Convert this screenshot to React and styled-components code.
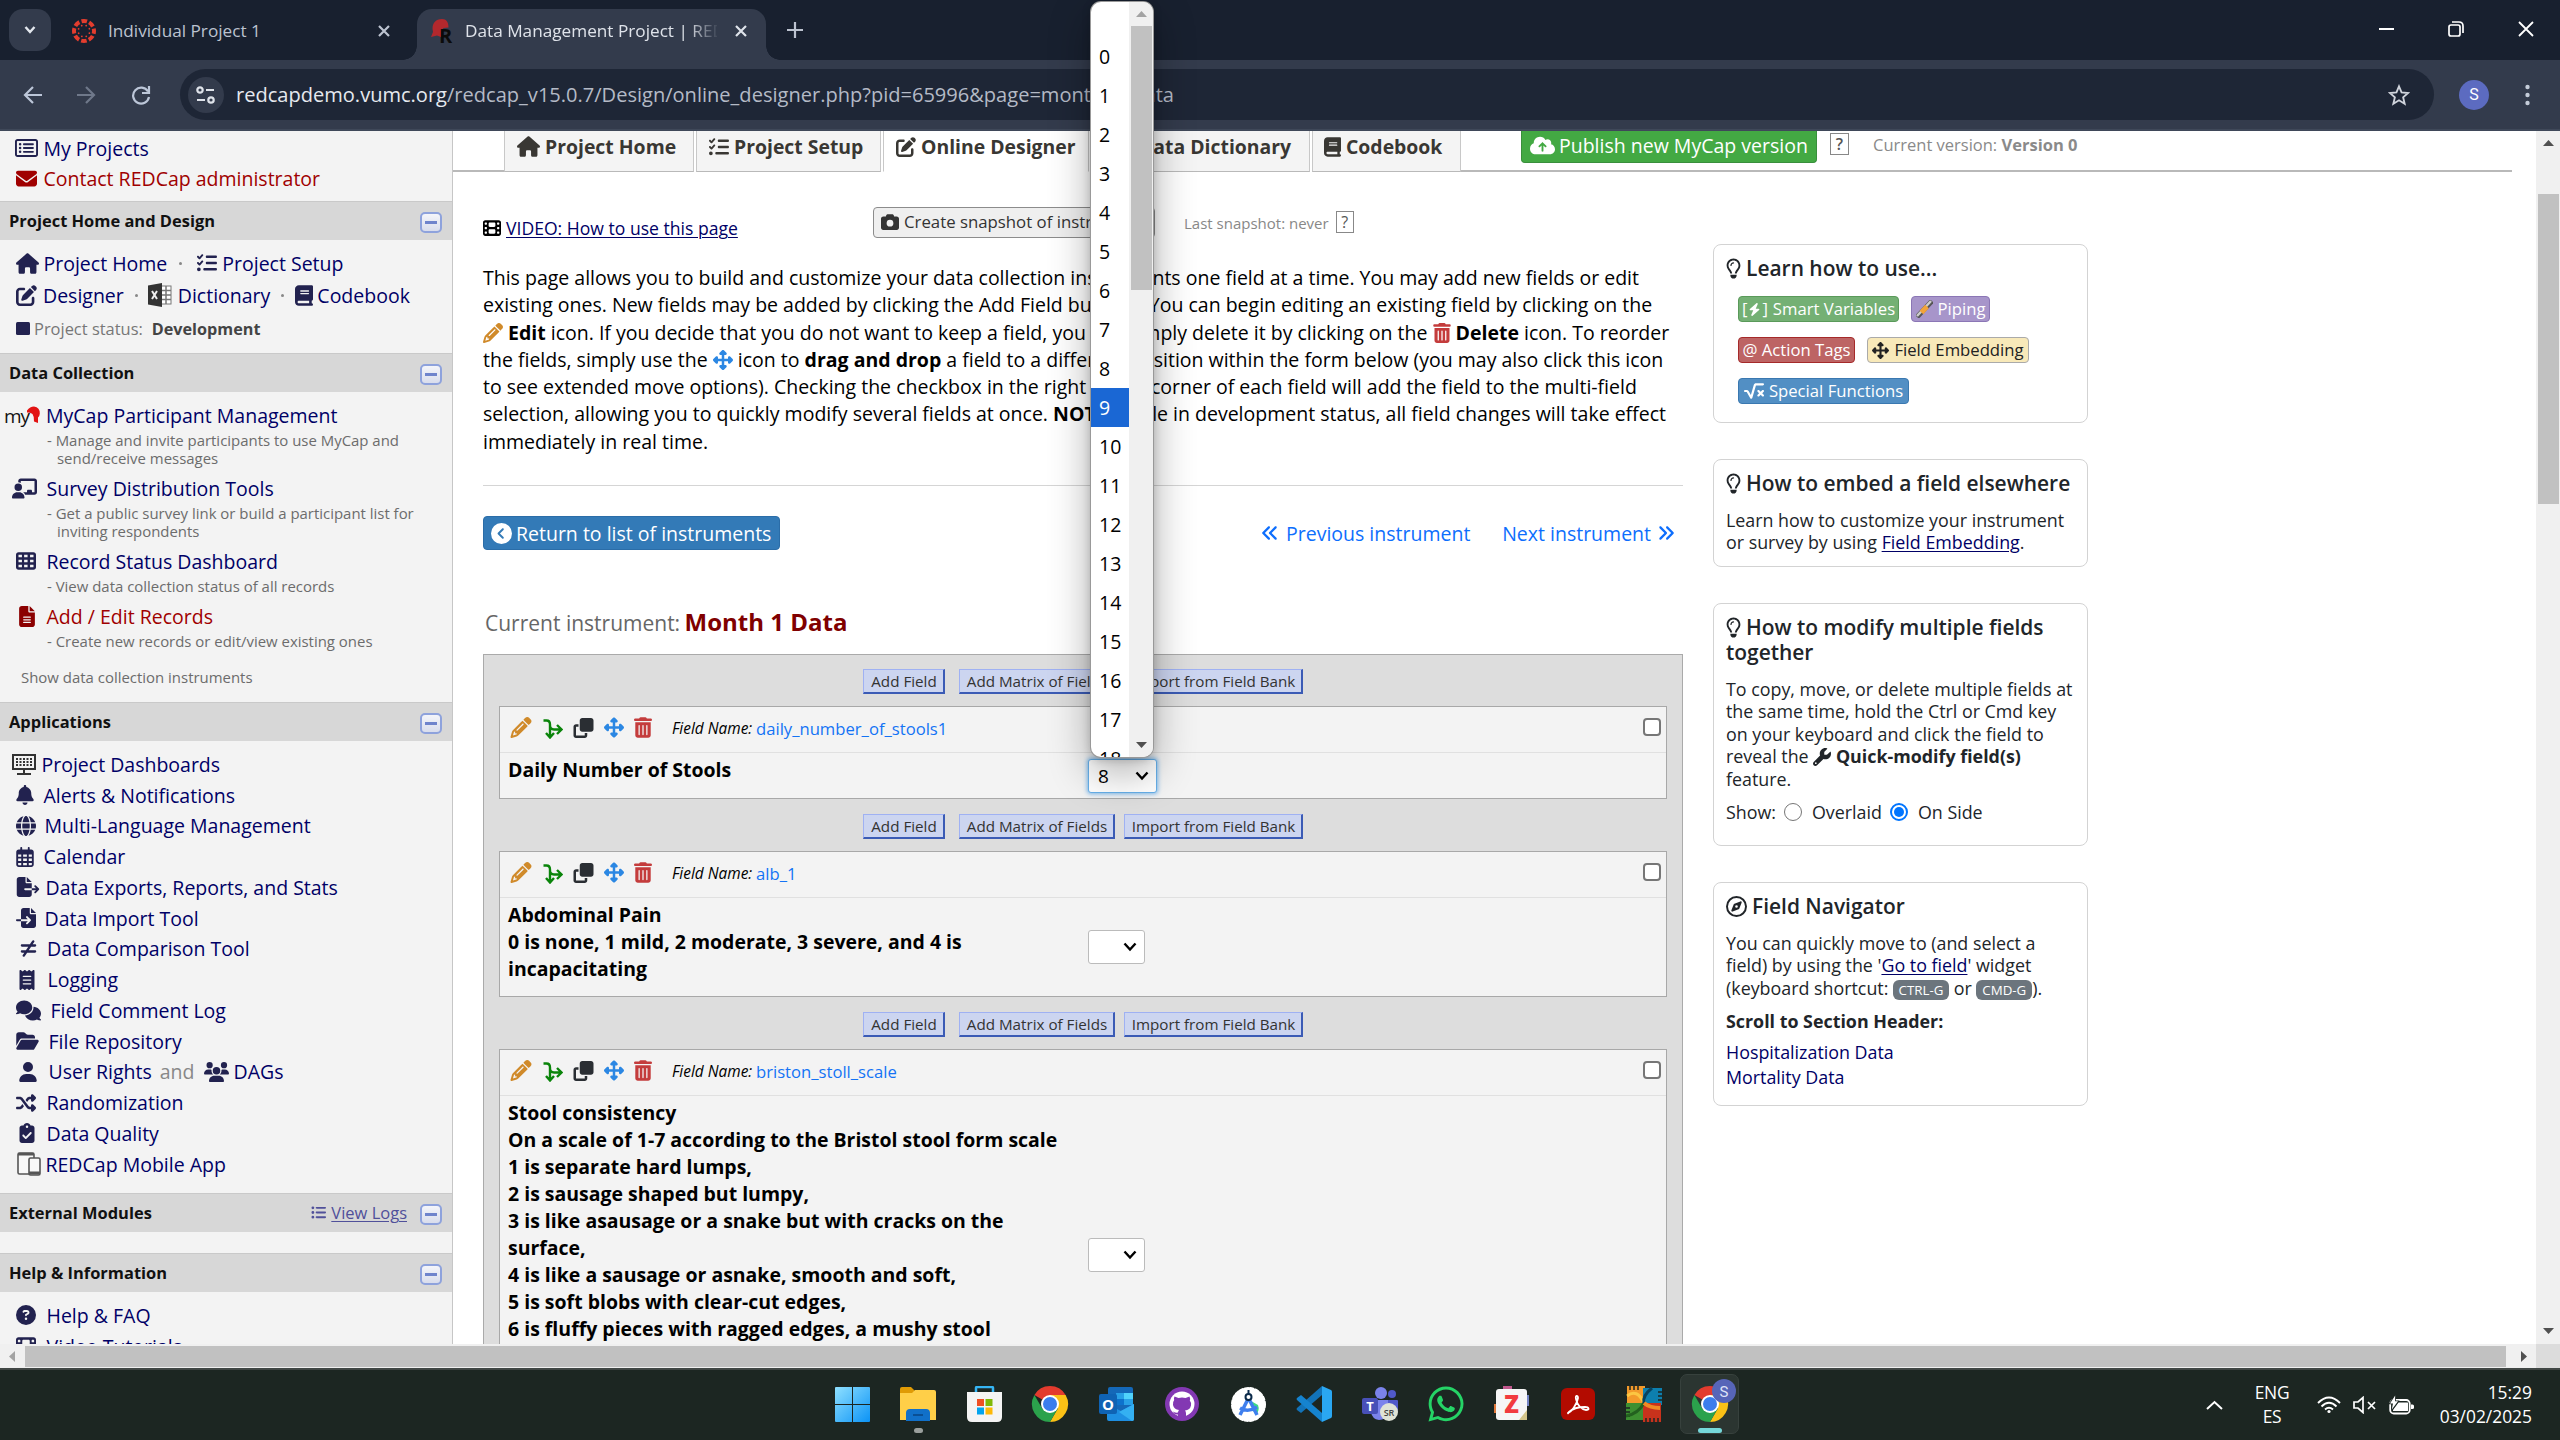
import React from "react";
import styled, { createGlobalStyle, css } from "styled-components";
import {
  FaHouse, FaListCheck, FaPenToSquare, FaBook, FaCloudArrowUp, FaFilm, FaCamera, FaPencil,
  FaUpDownLeftRight, FaTrashCan, FaCircleChevronLeft, FaAnglesLeft, FaAnglesRight, FaRegLightbulb,
  FaRegCompass, FaWrench, FaEnvelope, FaRegRectangleList, FaChalkboardUser, FaTableCells,
  FaFileLines, FaBell, FaGlobe, FaRegCalendarDays, FaFileExport, FaFileImport, FaNotEqual,
  FaReceipt, FaComments, FaFolderOpen, FaUser, FaUsers, FaShuffle, FaClipboardCheck,
  FaCircleQuestion, FaListUl, FaClone, FaBolt, FaSquareRootVariable, FaWhatsapp,
} from "react-icons/fa6";

const Global = createGlobalStyle`
  * { box-sizing: border-box; }
  body { margin: 0; overflow: hidden; font-family: "Open Sans", "Noto Sans", sans-serif; color: #000; }
  svg { display: block; flex: none; }
`;

const Screen = styled.div`
  width: 2560px; height: 1440px; display: flex; flex-direction: column;
  position: relative; overflow: hidden; background: #fff;
`;

const Icon = styled.span`
  display: inline-flex; align-items: center; justify-content: center; flex: none;
  width: ${(p) => p.$w}px; color: ${(p) => p.$c || "inherit"};
  margin-left: ${(p) => p.$ml || 0}px; margin-right: ${(p) => p.$mr || 0}px;
  ${(p) => p.$inline && css`vertical-align: ${p.$va || -3}px;`}
  svg { width: ${(p) => p.$w}px; height: ${(p) => p.$h || p.$w}px; }
`;

/* ---------- browser chrome ---------- */
const TabStrip = styled.div`
  height: 60px; flex: none; background: #18202f; display: flex; align-items: flex-start; padding: 9px 25px 0 9px;
`;
const TabSearch = styled.div`
  width: 42px; height: 42px; border-radius: 14px; background: #333b4c; color: #e3e7ee;
  display: flex; align-items: center; justify-content: center;
`;
const BrowserTab = styled.div`
  height: 51px; display: flex; align-items: center; padding: 0 0 8px; position: relative;
  width: ${(p) => p.$w}px; margin-left: ${(p) => p.$ml}px; padding-left: ${(p) => p.$pl}px;
  color: ${(p) => (p.$active ? "#dfe3ea" : "#bcc3d0")}; font-size: 17.2px;
  ${(p) => p.$active && css`
    background: #333b4c; border-radius: 15px 15px 0 0;
    &::before, &::after { content: ""; position: absolute; bottom: 0; width: 14px; height: 14px; }
    &::before { left: -14px; background: radial-gradient(circle at 0 0, transparent 13.5px, #333b4c 14px); }
    &::after { right: -14px; background: radial-gradient(circle at 100% 0, transparent 13.5px, #333b4c 14px); }
  `}
`;
const TabTitle = styled.span`
  white-space: nowrap; overflow: hidden; width: ${(p) => p.$w}px; margin-left: 12px; line-height: 26px; padding-top: 1px;
  ${(p) => p.$fade && css`-webkit-mask-image: linear-gradient(90deg, #000 88%, transparent 101%); mask-image: linear-gradient(90deg, #000 88%, transparent 101%);`}
`;
const NewTab = styled.div`margin: 12px 0 0 20px;`;
const WindowButtons = styled.div`
  margin: 10px 0 0 auto; display: flex; gap: 53px; align-items: center; height: 20px; color: #fff;
`;
const Toolbar = styled.div`
  height: 71px; flex: none; background: #333b4c; border-bottom: 2px solid #3f4859;
  display: flex; align-items: center; padding: 1px 22px 1px 23px; color: #bcc6d8;
`;
const NavButtons = styled.div`display: flex; gap: 30px; width: 157px; align-items: center;`;
const Omnibox = styled.div`
  height: 51px; width: 2254px; border-radius: 26px; background: #1e2636;
  display: flex; align-items: center; padding: 0 24px 0 8px; color: #b4bac6;
  font-size: 20.06px; white-space: nowrap;
`;
const SiteChip = styled.span`
  width: 36px; height: 36px; border-radius: 50%; background: #333b4c; margin-right: 12px;
  display: flex; align-items: center; justify-content: center;
`;
const Host = styled.span`color: #e6e9ef;`;
const Spacer = styled.span`flex: 1;`;
const Avatar = styled.span`
  width: 30px; height: 30px; border-radius: 50%; background: #5c6bc0; color: #fff; margin: 0 36px 0 25px;
  font: 16px Roboto, sans-serif; display: flex; align-items: center; justify-content: center;
`;

/* ---------- page ---------- */
const Page = styled.div`height: 1213px; flex: none; display: flex; overflow: hidden;`;
const Sidebar = styled.div`
  width: 453px; flex: none; background: #f3f3f3; border-right: 1px solid #c6c6c6; overflow: hidden;
  display: flex; flex-direction: column; color: #000066; font-size: 19.5px; white-space: nowrap;
`;
const SideBlock = styled.div`
  flex: none; height: ${(p) => p.$h}px; padding-top: ${(p) => p.$pt || 0}px; overflow: hidden;
`;
const SideHeader = styled.div`
  height: 39px; flex: none; background: #d7d7d7; border-top: 1px solid #c9c9c9; color: #111;
  display: flex; align-items: center; padding: 0 10px 2px 9px; font-weight: 700; font-size: 16.45px;
`;
const Toggle = styled.span`
  width: 22px; height: 21px; border: 2px solid #8ea2dc; border-radius: 5px; background: linear-gradient(#f4f5fa, #d9ddec);
  display: flex; align-items: center; justify-content: center; margin: 4px 0 0 13px;
  &::after { content: ""; width: 12px; height: 3px; background: #6f84cc; }
`;
const ViewLogs = styled.span`
  margin-left: auto; color: #50509a; font-weight: 400; font-size: 16.5px; display: flex; align-items: center; gap: 5px;
  u { text-underline-offset: 2px; text-decoration-thickness: 1px; }
`;
const NavRow = styled.div`
  display: flex; align-items: center; height: ${(p) => p.$h || 30.75}px; color: ${(p) => p.$c || "#000066"};
  font-size: ${(p) => p.$fs || 19.5}px;
`;
const IconSlot = styled.span`
  width: ${(p) => p.$w}px; padding-left: ${(p) => p.$pl}px; flex: none; display: flex; align-items: center;
  color: ${(p) => p.$c || "#22224f"};
`;
const Dot = styled.span`width: 3px; height: 3px; border-radius: 50%; background: #888; margin: 0 ${(p) => p.$r}px 0 ${(p) => p.$l}px;`;
const Gray = styled.span`color: #888; margin: 0 10px 0 8px;`;
const StatusValue = styled.b`color: #444; margin-left: 9px; font-size: 16.2px;`;
const SubText = styled.div`
  font-size: 14.95px; line-height: 18px; color: #6c6c6c; padding-left: ${(p) => p.$pl || 57}px;
  text-indent: ${(p) => (p.$pl ? 0 : -10)}px; height: ${(p) => p.$h}px;
`;
const MyCapMark = styled.span`
  width: 46px; flex: none; padding-left: 4px; display: flex; align-items: center; color: #111; font-size: 19px; letter-spacing: -1.2px;
  svg { margin-left: -2px; margin-top: 0; }
`;

const Main = styled.div`flex: 1; min-width: 0; background: #fff; overflow: hidden;`;
const PageTabs = styled.div`height: 41px; display: flex; position: relative;`;
const TabLine = styled.div`
  border-bottom: 2px solid #b9b9b9; width: ${(p) => p.$w}px; margin-left: ${(p) => p.$ml || 0}px; display: flex; flex: none;
`;
const PageTab = styled.div`
  height: 41px; width: ${(p) => p.$w}px; flex: none; display: flex; align-items: center; padding: 0 0 9px ${(p) => p.$pl || 12}px;
  margin-right: 2px; gap: 5px; background: ${(p) => (p.$active ? "#fff" : "#f4f4f4")}; font-weight: 700; font-size: 19.4px; color: #393733;
  border: 1px solid #c8c8c8; border-top: 0; border-bottom-color: ${(p) => (p.$active ? "#fff" : "#b9b9b9")}; white-space: nowrap;
`;
const PublishButton = styled.div`
  margin-left: 60px; height: 32px; width: 296px; background: #43a943; border: 1px solid #398f3c; border-top: 0; border-radius: 0 0 4px 4px;
  color: #fff; font-size: 19.5px; display: flex; align-items: center; padding: 0 0 2px 8px; gap: 4px; white-space: nowrap;
`;
const HelpBox = styled.span`
  width: ${(p) => p.$w}px; height: 22px; border: 1px solid #888; color: #555; font-size: 16px; font-weight: ${(p) => p.$b || 400};
  display: flex; align-items: center; justify-content: center; margin: ${(p) => p.$m};
`;
const VersionText = styled.span`color: #8a8a8a; font-size: 16.5px; margin: 2px 0 0 24px; line-height: 23px;`;

const Columns = styled.div`display: flex; padding-left: 30px; gap: 30px;`;
const Left = styled.div`width: 1200px; flex: none;`;
const TopRow = styled.div`display: flex; padding-top: 35px; height: 66px; white-space: nowrap;`;
const VideoLink = styled.div`
  display: flex; align-items: center; gap: 5px; width: 390px; height: 42px; font-size: 17.58px; color: #000066;
  text-decoration: underline; text-underline-offset: 2px; text-decoration-thickness: 1px;
`;
const SnapButton = styled.div`
  width: 282px; height: 31px; border: 1px solid #8c8c8c; border-radius: 4px; background: #efefef; color: #333; font-size: 16.8px;
  display: flex; align-items: center; padding: 0 0 2px 7px; gap: 5px;
`;
const SnapText = styled.span`color: #888; font-size: 15px; margin: 5px 0 0 29px; line-height: 22px;`;
const Intro = styled.div`
  margin: 26px 0 30px; font-size: 19.5px; line-height: 27.3px; white-space: nowrap;
  div { height: 27.3px; }
`;
const Rule = styled.div`height: 1px; background: #d5d5d5;`;
const ReturnRow = styled.div`
  margin-top: 30px; display: flex; height: 34px; align-items: center; color: #0d6efd; font-size: 19.5px; white-space: nowrap;
`;
const ReturnButton = styled.div`
  width: 297px; height: 34px; border-radius: 4px; background: #337ab7; border: 1px solid #2b6da8; color: #fff;
  display: flex; align-items: center; padding: 0 0 0 7px; gap: 4px; margin-right: 481px;
`;
const InstrumentTitle = styled.div`
  margin: 57px 0 17px 2px; height: 30px; line-height: 30px; font-size: 21px; color: #666; white-space: nowrap;
`;
const InstrumentName = styled.b`margin-left: -1px; color: #800000; font-size: 24px;`;
const Designer = styled.div`
  border: 1px solid #aaa; background: #ddd; padding: 0 15px; height: 900px;
`;
const AddRow = styled.div`
  display: flex; padding: ${(p) => (p.$first ? 14 : 15)}px 0 12px 364px; height: ${(p) => (p.$first ? 51 : 52)}px;
`;
const AddButton = styled.div`
  width: ${(p) => p.$w}px; margin-right: ${(p) => p.$mr || 0}px; height: 25px; background: #ccd5f0; border: 1px solid #9fb1f3;
  border-right: 2px solid #3b5bb5; border-bottom: 2px solid #3b5bb5; color: #333; font-size: 15.2px; white-space: nowrap;
  display: flex; align-items: center; justify-content: center; padding-left: 1px;
`;
const FieldBox = styled.div`border: 1px solid #a8a8a8; background: #f3f3f3; flex: none;`;
const FieldHead = styled.div`
  height: 46px; border-bottom: 1px solid #e0e0e0; display: flex; align-items: center; padding: 0 5px 4px 10px; font-size: 16.65px;
  i { font-size: 15.4px; margin-left: 20px; width: 84px; margin-top: 2px; }
`;
const FieldLink = styled.span`color: #1473f5; margin-top: 2px;`;
const Checkbox = styled.span`width: 18px; height: 18px; border: 2px solid #767676; border-radius: 4px; background: #fff; margin: -1px 0 0 auto;`;
const FieldBody = styled.div`height: ${(p) => p.$h}px; display: flex; align-items: center; padding-left: 8px;`;
const FieldLabel = styled.div`
  align-self: flex-start; width: 580px; padding-top: 3px; font-weight: 700; font-size: 19.48px; line-height: 27px; white-space: nowrap;
`;
const Select = styled.div`
  width: ${(p) => (p.$open ? 69 : 57)}px; height: 34px; border: 1px solid #bbb; border-radius: 3px; background: #fff; font-size: 19px;
  display: flex; align-items: center; justify-content: space-between; padding: 0 7px 0 9px;
  ${(p) => p.$open && css`border-color: #66afe9; box-shadow: 0 0 4px 1px #7db9ec;`}
`;

const Cards = styled.div`width: 375px; padding-top: 72px; flex: none;`;
const Card = styled.div`
  border: 1px solid #d3d3d3; border-radius: 8px; height: ${(p) => p.$h}px; margin-bottom: ${(p) => p.$mb || 0}px;
  padding: 11px 0 0 12px; color: #212529; font-size: 17.85px; line-height: 22.4px; white-space: nowrap;
`;
const CardTitle = styled.div`font-size: 20.95px; font-weight: 600; line-height: 25px; margin-bottom: ${(p) => p.$mb || 13}px;`;
const ChipRow = styled.div`display: flex; gap: 12px; margin: 0 0 15px 12px;`;
const Chip = styled.div`
  height: 26px; width: ${(p) => p.$w}px; background: ${(p) => p.$bg}; border: 1px solid ${(p) => p.$bd}; border-radius: 4px; color: ${(p) => p.$c || "#fff"};
  font-size: 16.7px; display: flex; align-items: center; justify-content: center; gap: 5px;
`;
const Brackets = styled.span`display: flex; align-items: center; gap: 1px;`;
const Link = styled.span`color: #000066; text-decoration: ${(p) => (p.$plain ? "none" : "underline")}; text-underline-offset: 2px; text-decoration-thickness: 1px;`;
const RadioRow = styled.div`display: flex; align-items: center; margin-top: 11px;`;
const Radio = styled.span`
  width: 18px; height: 18px; border-radius: 50%; border: ${(p) => (p.$on ? "2px solid #0075ff" : "1.5px solid #767676")}; background: #fff;
  margin: 0 ${(p) => (p.$on ? 10 : 10)}px 0 ${(p) => p.$ml}px; display: flex; align-items: center; justify-content: center;
  ${(p) => p.$on && css`&::after { content: ""; width: 10px; height: 10px; border-radius: 50%; background: #0075ff; }`}
`;
const Kbd = styled.span`
  display: inline-block; width: 56px; height: 20px; border-radius: 6px; background: #6c757d; color: #fff; font-size: 13.3px; line-height: 20px; text-align: center;
  vertical-align: 0;
`;
const SectionHeading = styled.div`margin-top: 10px; font-weight: 700;`;
const LinkList = styled.div`margin-top: 8px; line-height: 25px;`;

const VScroll = styled.div`
  width: 24px; flex: none; background: #f0f0f0; display: flex; flex-direction: column; align-items: center; justify-content: space-between; padding: 9px 0 10px;
`;
const VThumb = styled.div`width: 21px; height: 310px; background: #c1c1c1; margin: 48px 0 auto;`;
const HScroll = styled.div`height: 24px; flex: none; background: #f0f0f0; display: flex; align-items: center; padding-left: 9px;`;
const HThumb = styled.div`width: 2481px; height: 21px; background: #c1c1c1; margin: 0 15px 0 10px;`;
const Corner = styled.div`width: 24px; height: 24px; background: #dcdcdc; margin-left: auto;`;

/* ---------- popup ---------- */
const Popup = styled.div`
  position: absolute; left: 1091px; top: 2px; width: 62px; height: 755px; background: #fff; border-radius: 10px; overflow: hidden;
  display: flex;
`;
const PopupShadow = styled.div`
  position: absolute; left: 1090px; top: 1px; width: 64px; height: 757px; border-radius: 11px; background: #999;
  box-shadow: 0 14px 42px rgba(0, 0, 0, 0.32), 0 2px 8px rgba(0,0,0,.18);
`;
const Options = styled.div`width: 38px; font-size: 19.5px;`;
const Option = styled.div`
  height: ${(p) => p.$h || 39}px; line-height: 39px; padding-left: 8px; white-space: nowrap;
  ${(p) => p.$on && css`background: #1a67d4; color: #fff;`}
`;
const PopupScroll = styled.div`
  width: 24px; background: #f0f0f0; display: flex; flex-direction: column; align-items: center; padding: 9px 0;
`;
const PopupThumb = styled.div`width: 21px; height: 264px; background: #c1c1c1; margin: 9px 0 auto 1px;`;

/* ---------- taskbar ---------- */
const Taskbar = styled.div`
  height: 72px; flex: none; background: #1c2622; border-top: 2px solid #414745; display: flex; align-items: center; color: #fff; padding: 0 28px 0 819px;
`;
const Task = styled.div`
  width: 66px; height: 70px; display: flex; align-items: center; justify-content: center; flex: none; position: relative; padding-bottom: 2px;
  svg { position: relative; }
`;
const Running = styled.span`
  position: absolute; bottom: 7px; height: 5px; border-radius: 3px; width: ${(p) => p.$w}px; background: ${(p) => p.$c};
`;
const ActiveTile = styled.span`position: absolute; top: 4px; left: 3px; width: 59px; height: 60px; border-radius: 7px; background: #2b3531; border: 1px solid #37413d;`;
const Tray = styled.div`margin-left: auto; display: flex; align-items: center; font-size: 17.4px; line-height: 24px;`;
const TrayText = styled.div`text-align: ${(p) => p.$a}; margin-left: ${(p) => p.$ml}px; width: ${(p) => p.$w}px; white-space: nowrap; padding-bottom: 2px; letter-spacing: ${(p) => p.$ls || 0}px;`;

/* ---------- drawings ---------- */
const Stroke = ({ w, h, d, sw = 2, vb, ...r }) => (
  <svg width={w} height={h} viewBox={vb || `0 0 ${w} ${h}`} fill="none" stroke="currentColor" strokeWidth={sw} {...r}><path d={d} /></svg>
);
const CloseX = () => <Stroke w={14} h={14} d="M2 2l10 10M12 2L2 12" sw={2.2} />;
const Tri = ({ dir, c = "#505050" }) => {
  const d = { up: "M0 6h11L5.5 0z", down: "M0 0h11L5.5 6z", left: "M6 0v11L0 5.5z", right: "M0 0v11l6-5.5z" }[dir];
  const v = dir === "up" || dir === "down";
  return <svg width={v ? 11 : 6} height={v ? 6 : 11} fill={c}><path d={d} /></svg>;
};
const CanvasLogo = () => (
  <svg width="24" height="24" viewBox="0 0 24 24">
    <circle cx="12" cy="12" r="10" fill="none" stroke="#e33d2e" strokeWidth="4" strokeDasharray="5.6 2.25" strokeDashoffset="2.8" />
    {[0, 45, 90, 135, 180, 225, 270, 315].map((a) => (
      <circle key={a} cx="12" cy="6.2" r="0.9" fill="#e33d2e" transform={`rotate(${a + 22} 12 12)`} />
    ))}
  </svg>
);
const RedcapLogo = () => (
  <svg width="23" height="24" viewBox="0 0 23 24">
    <path d="M3 13C1 4 6 0 12 0c4.500 0 6.500 3 6.500 8.500l-5 .5-2 3-.5 6-4-1.500L1 18z" fill="#b3282d" />
    <text x="9" y="23.500" fontFamily="Open Sans, sans-serif" fontWeight="700" fontSize="20" fill="#0b0b0b">R</text>
  </svg>
);
const Branch = () => (
  <svg width="20" height="22" viewBox="0 0 20 22" fill="none" stroke="#0a840a" strokeWidth="2.4">
    <path d="M.5 3.500h3q3.500 0 3.500 4V20M7 8.500q0 4 4 4h7M3 16l4 4.500 4-4.500M14 8l4.600 4.500L14 17" />
  </svg>
);
const Excel = () => (
  <svg width="24" height="24" viewBox="0 0 24 24">
    <rect x="12" y="3" width="11" height="18" fill="#fff" stroke="#777" />
    <path d="M13 7.5h10M13 12h10M13 16.5h10M18 3v18" stroke="#777" strokeWidth="1.5" />
    <path d="M0 2.5L14 0v24L0 21.500z" fill="#333" />
    <path d="M4 8l5 8M9 8l-5 8" stroke="#eee" strokeWidth="2" />
  </svg>
);
const Board = () => (
  <svg width="24" height="21" viewBox="0 0 24 21">
    <rect x="1" y="1" width="22" height="14" fill="#f3f3f3" stroke="#333" strokeWidth="2" />
    <path d="M4 5h16M4 8h16M4 11h16" stroke="#333" strokeWidth="2" strokeDasharray="2 1.500" />
    <path d="M12 15v4M5 20h14" stroke="#333" strokeWidth="2" />
  </svg>
);
const Devices = () => (
  <svg width="24" height="24" viewBox="0 0 24 24" fill="#f8f8f8" stroke="#555" strokeWidth="1.600">
    <rect x="1" y="1" width="16" height="21" rx="1.500" /><path d="M1 2.200h16" strokeWidth="2.600" />
    <rect x="12" y="6" width="11" height="17" rx="1.500" />
    <path d="M12 21h11" strokeWidth="3" />
  </svg>
);
const MyCapHat = () => <svg width="13" height="19" viewBox="0 0 13 19"><path d="M0 4.500Q3 .5 7 .500q6 1 5.800 7-.2 3-1.800 4v5.500l-4-1.500q.5-4.500-1.500-7.500-2-2-5.500-1.500z" fill="#e21313" /></svg>;
const Pipe = () => (
  <svg width="17" height="18" viewBox="0 0 17 18"><path d="M1 17L16 1" stroke="#555" strokeWidth="5" /><path d="M1 16L15 1" stroke="#ccc" strokeWidth="2.5" /><path d="M5.500 12.500L11 6.500" stroke="#f2a33a" strokeWidth="5" /></svg>
);
const Chevron = () => <Stroke w={14} h={10} d="M1.500 1.500L7 7.500l5.500-6" sw={2.400} />;

const ChromeLogo = ({ badge }) => (
  <svg width="38" height="38" viewBox="0 0 38 38" overflow="visible">
    <path d="M19 19L3.400 10A18 18 0 0 1 34.600 10z" fill="#e33b2e" />
    <path d="M34.600 10A18 18 0 0 1 19 37l7.800-13.500L19 10z" fill="#fbc116" />
    <path d="M19 37A18 18 0 0 1 3.400 10l7.800 13.500 15.600 0z" fill="#2ba24c" />
    <circle cx="19" cy="19" r="9" fill="#fff" /><circle cx="19" cy="19" r="7" fill="#3b7ded" />
    {badge && <><circle cx="33" cy="6" r="12" fill="#5765b8" /><text x="33" y="11.500" textAnchor="middle" fontSize="15" fill="#dfe3f7" fontFamily="Roboto, sans-serif">S</text></>}
  </svg>
);
const WinLogo = () => (
  <svg width="35" height="35" viewBox="0 0 35 35"><defs><linearGradient id="wl" x1="0" y1="0" x2="1" y2="1"><stop offset="0" stopColor="#8fe0ff" /><stop offset="1" stopColor="#0b93f6" /></linearGradient></defs>
    <path d="M0 1q0-1 1-1h16v17H0zM18 0h16q1 0 1 1v16H18zM0 18h17v17H1q-1 0-1-1zM18 18h17v16q0 1-1 1H18z" fill="url(#wl)" /></svg>
);
const Explorer = () => (
  <svg width="36" height="34" viewBox="0 0 36 34"><path d="M0 2q0-2 2-2h9l4 4-3 6H0z" fill="#e09b05" /><path d="M0 6h12l3-3h19q2 0 2 2v28H0z" fill="#ffcf48" />
    <path d="M6 34V26q0-4 4-4h16q4 0 4 4v8z" fill="#1170c9" /><path d="M13 28h10" stroke="#0a4f94" strokeWidth="2" /></svg>
);
const Store = () => (
  <svg width="35" height="36" viewBox="0 0 35 36"><path d="M9 8V2q0-1 1-1h15q1 0 1 1v6" fill="none" stroke="#35b5f4" strokeWidth="2.500" />
    <path d="M0 6h35v25q0 5-5 5H5q-5 0-5-5z" fill="#f4f4f4" />
    <path d="M10 13h7v7h-7z" fill="#f04f23" /><path d="M18.500 13h7v7h-7z" fill="#80b908" /><path d="M10 21.500h7v7h-7z" fill="#03a4ee" /><path d="M18.500 21.500h7v7h-7z" fill="#fdb807" /></svg>
);
const Outlook = () => (
  <svg width="35" height="34" viewBox="0 0 35 34"><rect x="9" width="25" height="24" rx="2" fill="#1468b8" /><path d="M17 6h8v6h-8z" fill="#28a0e6" /><path d="M25 6h9v6h-9z" fill="#50d3fb" /><path d="M17 12h8v6h-8z" fill="#0d72cc" /><path d="M25 12h9v6h-9z" fill="#28a0e6" />
    <path d="M8 17l14 7 13-7v15q0 2-2 2H10q-2 0-2-2z" fill="#1e8fe2" /><path d="M35 17v15q0 2-2 2L20 25z" fill="#34b0f2" />
    <rect y="7" width="18" height="20" rx="2" fill="#0f63b4" /><text x="9" y="22.500" textAnchor="middle" fontSize="15" fontWeight="700" fill="#fff" fontFamily="Open Sans, sans-serif">O</text></svg>
);
const AndroidStudio = () => (
  <svg width="35" height="35" viewBox="0 0 35 35"><circle cx="17.500" cy="17.500" r="16.300" fill="#fff" stroke="#fff" strokeWidth="2.400" strokeDasharray="3.200 2" strokeLinecap="round" /><path d="M20 14l7 4q2 5-2 10-5-6-5-14z" fill="#3ddc84" />
    <path d="M17.500 11L9 28M17.500 11L26 28M9 21q8 5 17-1" fill="none" stroke="#3f7fee" strokeWidth="3.500" /><circle cx="17.500" cy="10" r="3" fill="#fff" stroke="#0b2a4a" strokeWidth="2" /><path d="M17.500 3v4" stroke="#0b2a4a" strokeWidth="2" /></svg>
);
const VSCode = () => (
  <svg width="36" height="36" viewBox="0 0 36 36"><path d="M26 0v9L5 27 1 24q-1-1 0-2z" fill="#1273b9" /><path d="M26 36v-9L5 9 1 12q-1 1 0 2z" fill="#1583cf" /><path d="M26 0l9 4q1 .5 1 2v24q0 1.500-1 2l-9 4z" fill="#2aa7f2" /></svg>
);
const Teams = () => (
  <svg width="36" height="34" viewBox="0 0 36 34"><circle cx="19" cy="6" r="6" fill="#7b83eb" /><circle cx="30" cy="7" r="4" fill="#5059c9" /><path d="M24 13h11q1 0 1 1v9q-2 6-8 6-4 0-4-6z" fill="#5059c9" /><path d="M10 13h16v13q-2 7-9 7-7-1-8-8z" fill="#7b83eb" />
    <rect y="11" width="16" height="16" rx="2" fill="#4850b8" /><text x="8" y="24" textAnchor="middle" fontSize="13" fontWeight="700" fill="#fff" fontFamily="Open Sans, sans-serif">T</text>
    <circle cx="27" cy="25" r="9" fill="#dfe3d6" /><text x="27" y="28.500" textAnchor="middle" fontSize="9" fontWeight="600" fill="#444" fontFamily="Open Sans, sans-serif">SR</text></svg>
);
const Zotero = () => (
  <svg width="36" height="36" viewBox="0 0 36 36"><path d="M9 0h9v6H9z" fill="#c0588d" /><path d="M30 9h5v11h-5z" fill="#7585c5" /><path d="M0 18h5v9H0z" fill="#e0793c" /><rect x="2" y="3" width="31" height="31" rx="3" fill="#f6f6f6" /><path d="M33 24l-8 10h8z" fill="#d4c58a" />
    <text x="17.500" y="27" textAnchor="middle" fontSize="24" fontWeight="800" fill="#f23b3f" fontFamily="Open Sans, sans-serif">Z</text></svg>
);
const Acrobat = () => (
  <svg width="34" height="32" viewBox="0 0 34 32"><rect width="34" height="32" rx="6" fill="#b30b00" />
    <path d="M7 25c3-1 9-8 10-15 0-3-3-3-2 1 1 6 6 11 10 11 4 0 3-3-1-3-6 0-13 2-16 5-1 1-1 2-1 1z" fill="none" stroke="#fff" strokeWidth="1.800" /></svg>
);
const Quilt = () => (
  <svg width="36" height="36" viewBox="0 0 36 36"><path d="M1 0h18v17H1z" fill="#f39a2b" /><path d="M17 2h19v17H17z" fill="#0d7fae" /><path d="M0 17h18v17H0z" fill="#3d8f31" /><path d="M17 17h18v19H17z" fill="#c8321c" />
    <path d="M4 0v4M8 0v4M12 0v4M36 6h-4M36 10h-4M36 14h-4M20 36v-4M24 36v-4M28 36v-4M32 36v-4M0 22h4M0 26h4M0 30h4" stroke="#1c2622" strokeWidth="1.500" /><path d="M1 10q10-8 17 7" stroke="#ffd84d" strokeOpacity=".7" fill="none" strokeWidth="3" /><path d="M0 30q12-2 18-13" stroke="#23611f" fill="none" strokeWidth="3" /><path d="M26 2q-10 8-8 15" stroke="#06425f" fill="none" strokeWidth="3" /><path d="M34 22q-10 0-16-5" stroke="#f08a24" fill="none" strokeWidth="4" /></svg>
);
const Github = () => (
  <svg width="34" height="34" viewBox="0 0 34 34"><circle cx="17" cy="17" r="17" fill="#8338b3" /><circle cx="17" cy="17" r="12.500" fill="#fff" />
    <path d="M9.500 9.500l4 1.500q3.500-1 7 0l4-1.500q1 2 .3 4 1.700 2 1.200 5-1 4.500-6 5 1 1.200 1 3V30h-8v-2.500q-4 .5-5-3 1.500 1.500 5 1 0-1.500 1-2.500-5-.5-6-5-.5-3 1.200-5-.7-2 .3-3.500z" fill="#8338b3" /></svg>
);
const Wifi = () => (
  <svg width="24" height="18" viewBox="0 0 24 18" fill="none" stroke="#fff" strokeWidth="1.900"><path d="M1 7Q12-4 23 7M4.500 10.500Q12 3 19.500 10.500M8 13.500q4-3.500 8 0" /><circle cx="12" cy="15.500" r="1.600" fill="#fff" stroke="none" /></svg>
);
const Mute = () => <Stroke w={24} h={18} d="M1 6h4l5-4.500v15L5 12H1zM15 6l7 7M22 6l-7 7" sw={1.700} />;
const Battery = () => (
  <svg width="25" height="20" viewBox="0 0 25 20">
    <rect x="1.200" y="5" width="19.500" height="13.500" rx="3.500" fill="none" stroke="#fff" strokeWidth="1.800" />
    <path d="M9.500 7.500h9q.5 0 .5.500v7.500q0 .5-.5.500h-14q-.5 0-.5-.5V15z" fill="#fff" />
    <path d="M22 9.500h1.500q1.500 0 1.500 1.500v1.500q0 1.500-1.500 1.500H22z" fill="#fff" />
    <path d="M6.200.500L1 8.500h3L2.800 14.500 9 6.200H6z" fill="#fff" stroke="#1c2622" strokeWidth="1.600" paintOrder="stroke" />
  </svg>
);

/* ---------- composed parts ---------- */
const Nav = ({ icon, iw = 20, ih = 20, ix = 16, tx = 44, c, ic, h, children }) => (
  <NavRow $c={c} $h={h}>
    <IconSlot $w={tx - 0.5} $pl={ix} $c={ic}><Icon $w={iw} $h={ih}>{icon}</Icon></IconSlot>
    {children}
  </NavRow>
);
const Head = ({ children, extra }) => <SideHeader>{children}{extra || <Spacer />}<Toggle /></SideHeader>;

const AddButtons = ({ first }) => (
  <AddRow $first={first}>
    <AddButton $w={82} $mr={14}>Add Field</AddButton>
    <AddButton $w={156} $mr={9}>Add Matrix of Fields</AddButton>
    <AddButton $w={179}>Import from Field Bank</AddButton>
  </AddRow>
);

const Field = ({ name, lines, h, value }) => (
  <FieldBox>
    <FieldHead>
      <Icon $w={22} $h={21} $c="#d08a2a"><FaPencil /></Icon>
      <Icon $w={20} $h={22} $ml={11}><Branch /></Icon>
      <Icon $w={21} $h={20} $ml={10} $c="#2a2e33"><FaClone /></Icon>
      <Icon $w={20} $h={21} $ml={10} $c="#2b87e3"><FaUpDownLeftRight /></Icon>
      <Icon $w={18} $h={21} $ml={10} $c="#c43c3c"><FaTrashCan /></Icon>
      <i>Field Name:</i>
      <FieldLink>{name}</FieldLink>
      <Checkbox />
    </FieldHead>
    <FieldBody $h={h}>
      <FieldLabel>{lines.map((l) => <div key={l}>{l}</div>)}</FieldLabel>
      <Select $open={!!value}><span>{value}</span><Chevron /></Select>
    </FieldBody>
  </FieldBox>
);

const fields = [
  { name: "daily_number_of_stools1", h: 45, value: "8", lines: ["Daily Number of Stools"] },
  { name: "alb_1", h: 98, lines: ["Abdominal Pain", "0 is none, 1 mild, 2 moderate, 3 severe, and 4 is", "incapacitating"] },
  {
    name: "briston_stoll_scale", h: 318,
    lines: [
      "Stool consistency", "On a scale of 1-7 according to the Bristol stool form scale", "1 is separate hard lumps,",
      "2 is sausage shaped but lumpy,", "3 is like asausage or a snake but with cracks on the", "surface,",
      "4 is like a sausage or asnake, smooth and soft,", "5 is soft blobs with clear-cut edges,",
      "6 is fluffy pieces with ragged edges, a mushy stool",
    ],
  },
];

const SidebarView = () => (
  <Sidebar>
    <SideBlock $h={70} $pt={2}>
      <Nav icon={<FaRegRectangleList />} iw={23} ih={22} ix={15} h={30.5}>My Projects</Nav>
      <Nav icon={<FaEnvelope />} iw={21} ih={21} c="#a00000" ic="#a00000" h={30}>Contact REDCap administrator</Nav>
    </SideBlock>
    <Head>Project Home and Design</Head>
    <SideBlock $h={113} $pt={7}>
      <NavRow $h={32}>
        <IconSlot $w={43.5} $pl={16}><Icon $w={23} $h={21}><FaHouse /></Icon></IconSlot>Project Home
        <Dot $l={12} $r={15} /><Icon $w={20} $h={20} $c="#22224f" $mr={5}><FaListCheck /></Icon>Project Setup
      </NavRow>
      <NavRow $h={32}>
        <IconSlot $w={43} $pl={16}><Icon $w={21}><FaPenToSquare /></Icon></IconSlot>Designer
        <Dot $l={11} $r={10} /><Icon $w={24} $mr={6}><Excel /></Icon>Dictionary
        <Dot $l={11} $r={11} /><Icon $w={18} $h={21} $c="#22224f" $mr={4}><FaBook /></Icon>Codebook
      </NavRow>
      <NavRow $h={35} $fs={16.45} $c="#777">
        <IconSlot $w={34} $pl={16}><svg width="14" height="13"><rect width="14" height="13" rx="1.500" fill="#22224f" /></svg></IconSlot>
        Project status:<StatusValue>Development</StatusValue>
      </NavRow>
    </SideBlock>
    <Head>Data Collection</Head>
    <SideBlock $h={310} $pt={8}>
      <NavRow $h={31}><MyCapMark>my<MyCapHat /></MyCapMark>MyCap Participant Management</NavRow>
      <SubText $h={42}>- Manage and invite participants to use MyCap and<br />send/receive messages</SubText>
      <Nav icon={<FaChalkboardUser />} iw={25} ih={21} ix={12} tx={47} h={31}>Survey Distribution Tools</Nav>
      <SubText $h={41}>- Get a public survey link or build a participant list for<br />inviting respondents</SubText>
      <Nav icon={<FaTableCells />} iw={20} ih={20} tx={47} h={32}>Record Status Dashboard</Nav>
      <SubText $h={24}>- View data collection status of all records</SubText>
      <Nav icon={<FaFileLines />} iw={16} ih={21} ix={19} tx={47} h={31} c="#a00000" ic="#8b0000">Add / Edit Records</Nav>
      <SubText $h={36}>- Create new records or edit/view existing ones</SubText>
      <SubText $h={20} $pl={21}>Show data collection instruments</SubText>
    </SideBlock>
    <Head>Applications</Head>
    <SideBlock $h={452} $pt={8}>
      <Nav icon={<Board />} iw={24} ih={21} ix={12} tx={42}>Project Dashboards</Nav>
      <Nav icon={<FaBell />} iw={18} ih={20} >Alerts &amp; Notifications</Nav>
      <Nav icon={<FaGlobe />} tx={45}>Multi-Language Management</Nav>
      <Nav icon={<FaRegCalendarDays />} iw={18} ih={20}>Calendar</Nav>
      <Nav icon={<FaFileExport />} iw={24} ih={20} tx={46}>Data Exports, Reports, and Stats</Nav>
      <Nav icon={<FaFileImport />} iw={20} ih={20} tx={45}>Data Import Tool</Nav>
      <Nav icon={<FaNotEqual />} iw={17} ih={19} ix={20} tx={47.5}>Data Comparison Tool</Nav>
      <Nav icon={<FaReceipt />} iw={16} ih={20} ix={19} tx={48}>Logging</Nav>
      <Nav icon={<FaComments />} iw={25} ih={21} tx={51}>Field Comment Log</Nav>
      <Nav icon={<FaFolderOpen />} iw={23} ih={20} tx={49}>File Repository</Nav>
      <Nav icon={<FaUser />} iw={18} ih={20} ix={19} tx={49}>
        User Rights<Gray>and</Gray><Icon $w={25} $h={20} $c="#22224f" $mr={4}><FaUsers /></Icon>DAGs
      </Nav>
      <Nav icon={<FaShuffle />} tx={47}>Randomization</Nav>
      <Nav icon={<FaClipboardCheck />} iw={16} ih={20} ix={19} tx={47}>Data Quality</Nav>
      <Nav icon={<Devices />} iw={24} ih={24} ix={17} tx={46}>REDCap Mobile App</Nav>
    </SideBlock>
    <Head extra={<ViewLogs><FaListUl size={15} /><u>View Logs</u></ViewLogs>}>External Modules</Head>
    <SideBlock $h={21} />
    <Head>Help &amp; Information</Head>
    <SideBlock $h={52} $pt={8}>
      <Nav icon={<FaCircleQuestion />} tx={47}>Help &amp; FAQ</Nav>
      <Nav icon={<FaFilm />} tx={47}>Video Tutorials</Nav>
    </SideBlock>
  </Sidebar>
);

const MainView = () => (
  <Main>
    <PageTabs>
      <TabLine $w={51} />
      <PageTab $w={190} $pl={12}><Icon $w={23} $h={21}><FaHouse /></Icon>Project Home</PageTab>
      <PageTab $w={185}><Icon $w={20}><FaListCheck /></Icon>Project Setup</PageTab>
      <PageTab $w={206} $active><Icon $w={20}><FaPenToSquare /></Icon>Online Designer</PageTab>
      <PageTab $w={219} $pl={20}><Icon $w={22}><FaBook /></Icon>Data Dictionary</PageTab>
      <PageTab $w={149} $pl={11}><Icon $w={17} $h={20}><FaBook /></Icon>Codebook</PageTab>
      <TabLine $w={1051} $ml={-2}>
        <PublishButton><Icon $w={25} $h={21}><FaCloudArrowUp /></Icon>Publish new MyCap version</PublishButton>
        <HelpBox $w={19} $b={600} $m="2px 0 0 13px">?</HelpBox>
        <VersionText>Current version: <b>Version 0</b></VersionText>
      </TabLine>
    </PageTabs>
    <Columns>
      <Left>
        <TopRow>
          <VideoLink><Icon $w={18} $c="#000"><FaFilm /></Icon>VIDEO: How to use this page</VideoLink>
          <SnapButton><Icon $w={18}><FaCamera /></Icon>Create snapshot of instruments</SnapButton>
          <SnapText>Last snapshot: never</SnapText><HelpBox $w={18} $m="4px 0 0 7px">?</HelpBox>
        </TopRow>
        <Intro>
          <div>This page allows you to build and customize your data collection instruments one field at a time. You may add new fields or edit</div>
          <div>existing ones. New fields may be added by clicking the Add Field buttons. You can begin editing an existing field by clicking on the</div>
          <div><Icon $inline $w={20} $c="#d08a2a" $mr={5}><FaPencil /></Icon><b>Edit</b> icon. If you decide that you do not want to keep a field, you can simply delete it by clicking on the <Icon $inline $w={18} $h={20} $c="#c43c3c"><FaTrashCan /></Icon> <b>Delete</b> icon. To reorder</div>
          <div>the fields, simply use the <Icon $inline $w={20} $c="#2b87e3"><FaUpDownLeftRight /></Icon> icon to <b>drag and drop</b> a field to a different position within the form below (you may also click this icon</div>
          <div>to see extended move options). Checking the checkbox in the right upper corner of each field will add the field to the multi-field</div>
          <div>selection, allowing you to quickly modify several fields at once. <b>NOTE:</b> While in development status, all field changes will take effect</div>
          <div>immediately in real time.</div>
        </Intro>
        <Rule />
        <ReturnRow>
          <ReturnButton><Icon $w={21}><FaCircleChevronLeft /></Icon>Return to list of instruments</ReturnButton>
          <Icon $w={18} $h={20} $mr={7}><FaAnglesLeft /></Icon>Previous instrument
          <Spacer />Next instrument<Icon $w={18} $h={20} $ml={6} $mr={8}><FaAnglesRight /></Icon>
        </ReturnRow>
        <InstrumentTitle>Current instrument: <InstrumentName>Month 1 Data</InstrumentName></InstrumentTitle>
        <Designer>
          {fields.map((f, i) => (
            <React.Fragment key={f.name}><AddButtons first={i === 0} /><Field {...f} /></React.Fragment>
          ))}
        </Designer>
      </Left>
      <Cards>
        <Card $h={179} $mb={36}>
          <CardTitle $mb={15}><Icon $inline $w={15} $h={21} $mr={5}><FaRegLightbulb /></Icon>Learn how to use...</CardTitle>
          <ChipRow>
            <Chip $w={161} $bg="#74b074" $bd="#5a9a5a"><Brackets>[<FaBolt size={13} />]</Brackets>Smart Variables</Chip>
            <Chip $w={79} $bg="#a795ca" $bd="#8b76b5"><Pipe />Piping</Chip>
          </ChipRow>
          <ChipRow>
            <Chip $w={117} $bg="#bd6464" $bd="#a52a2a">@ Action Tags</Chip>
            <Chip $w={162} $bg="#f8e9b9" $bd="#aaa" $c="#222"><FaUpDownLeftRight size={17} />Field Embedding</Chip>
          </ChipRow>
          <ChipRow><Chip $w={171} $bg="#528fc4" $bd="#3a78b0"><FaSquareRootVariable size={20} />Special Functions</Chip></ChipRow>
        </Card>
        <Card $h={108} $mb={36}>
          <CardTitle $mb={12.500}><Icon $inline $w={15} $h={21} $mr={5}><FaRegLightbulb /></Icon>How to embed a field elsewhere</CardTitle>
          Learn how to customize your instrument<br />or survey by using <Link>Field Embedding</Link>.
        </Card>
        <Card $h={243} $mb={36}>
          <CardTitle $mb={13}><Icon $inline $w={15} $h={21} $mr={5}><FaRegLightbulb /></Icon>How to modify multiple fields<br />together</CardTitle>
          To copy, move, or delete multiple fields at<br />the same time, hold the Ctrl or Cmd key<br />on your keyboard and click the field to<br />
          reveal the <Icon $inline $w={18}><FaWrench /></Icon> <b>Quick-modify field(s)</b><br />feature.
          <RadioRow>Show:<Radio $ml={8} />Overlaid<Radio $on $ml={8} />On Side</RadioRow>
        </Card>
        <Card $h={224}>
          <CardTitle><Icon $inline $w={21} $mr={5}><FaRegCompass /></Icon>Field Navigator</CardTitle>
          You can quickly move to (and select a<br />field) by using the '<Link>Go to field</Link>' widget<br />(keyboard shortcut: <Kbd>CTRL-G</Kbd> or <Kbd>CMD-G</Kbd>).
          <SectionHeading>Scroll to Section Header:</SectionHeading>
          <LinkList><Link $plain>Hospitalization Data</Link><br /><Link $plain>Mortality Data</Link></LinkList>
        </Card>
      </Cards>
    </Columns>
  </Main>
);

const tasks = [
  <WinLogo />, <Explorer />, <Store />, <ChromeLogo />, <Outlook />, <Github />, <AndroidStudio />, <VSCode />, <Teams />,
  <FaWhatsapp size={40} color="#25d366" />, <Zotero />, <Acrobat />, <Quilt />, <ChromeLogo badge />,
];

export default function App() {
  return (
    <Screen>
      <Global />
      <TabStrip>
        <TabSearch><Stroke w={12} h={10} d="M1.500 2L6 7l4.500-5" sw={2.400} /></TabSearch>
        <BrowserTab $w={366} $ml={0} $pl={21}><CanvasLogo /><TabTitle $w={269}>Individual Project 1</TabTitle><CloseX /></BrowserTab>
        <BrowserTab $w={349} $ml={0} $pl={13} $active><RedcapLogo /><TabTitle $w={252} $fade>Data Management Project | REDCap</TabTitle><Icon $w={14} $ml={17}><CloseX /></Icon></BrowserTab>
        <NewTab><Stroke w={18} h={18} d="M9 1v16M1 9h16" sw={2.200} color="#bcc3d0" /></NewTab>
        <WindowButtons>
          <Stroke w={16} h={16} d="M0 8h15" />
          <svg width="16" height="16" fill="none" stroke="#fff" strokeWidth="1.700"><rect x="1" y="4" width="11" height="11" rx="2" /><path d="M4 1h7q4 0 4 4v7" /></svg>
          <Stroke w={18} h={16} d="M2 1l14 14M16 1L2 15" sw={1.800} />
        </WindowButtons>
      </TabStrip>
      <Toolbar>
        <NavButtons>
          <Stroke w={20} h={20} d="M19 10H2M10 2l-8 8 8 8" sw={2.200} />
          <Icon $w={20} $c="#6f788a" $ml={3}><Stroke w={20} h={20} d="M1 10h17M10 2l8 8-8 8" sw={2.200} /></Icon>
          <Icon $w={20} $ml={5}><Stroke w={20} h={20} d="M17 6.500A8 8 0 1 0 18 12M18 1v7h-7" sw={2.200} /></Icon>
        </NavButtons>
        <Omnibox>
          <SiteChip><svg width="20" height="18" fill="none" stroke="#dfe3ea" strokeWidth="2.200"><circle cx="4" cy="4" r="2.700" /><path d="M10 4h8M1 14h8" /><circle cx="15" cy="14" r="2.700" /></svg></SiteChip>
          <Host>redcapdemo.vumc.org</Host>/redcap_v15.0.7/Design/online_designer.php?pid=65996&amp;page=month_1_data
          <Spacer />
          <svg width="22" height="22" viewBox="0 0 24 24" fill="none" stroke="#d0d4dc" strokeWidth="2"><path d="M12 2.500l2.800 6.700 7.200.6-5.500 4.700 1.700 7.100L12 17.800l-6.200 3.800 1.700-7.100L2 9.800l7.200-.6z" /></svg>
        </Omnibox>
        <Avatar>S</Avatar>
        <svg width="5" height="22" fill="#c5ccd9"><circle cx="2.500" cy="3" r="2.200" /><circle cx="2.500" cy="11" r="2.200" /><circle cx="2.500" cy="19" r="2.200" /></svg>
      </Toolbar>
      <Page>
        <SidebarView />
        <MainView />
        <VScroll><Tri dir="up" /><VThumb /><Tri dir="down" /></VScroll>
      </Page>
      <HScroll><Tri dir="left" c="#a3a3a3" /><HThumb /><Tri dir="right" /><Corner /></HScroll>
      <Taskbar>
        {tasks.map((t, i) => (
          <Task key={i}>
            {i === 13 && <ActiveTile />}{t}
            {i === 1 && <Running $w={9} $c="#9a9f9d" />}{i === 13 && <Running $w={24} $c="#75d7d9" />}
          </Task>
        ))}
        <Tray>
          <Stroke w={17} h={10} d="M1 9l7.500-7L16 9" sw={2} />
          <TrayText $a="center" $ml={28} $w={42} $ls={-0.3}>ENG<br />ES</TrayText>
          <Icon $w={24} $h={18} $ml={24}><Wifi /></Icon><Icon $w={24} $h={18} $ml={12}><Mute /></Icon><Icon $w={25} $h={20} $ml={12}><Battery /></Icon>
          <TrayText $a="right" $ml={17} $w={101}>15:29<br />03/02/2025</TrayText>
        </Tray>
      </Taskbar>
      <PopupShadow />
      <Popup>
        <Options>
          <Option $h={35} />
          {Array.from({ length: 19 }, (_, n) => <Option key={n} $on={n === 9}>{n}</Option>)}
        </Options>
        <PopupScroll><Tri dir="up" c="#a3a3a3" /><PopupThumb /><Tri dir="down" /></PopupScroll>
      </Popup>
    </Screen>
  );
}
